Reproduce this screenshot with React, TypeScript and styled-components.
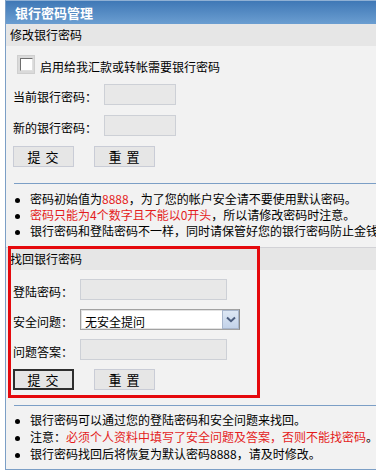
import React from "react";
import styled, { createGlobalStyle } from "styled-components";

const Global = createGlobalStyle`
  html, body { margin: 0; padding: 0; background: #ffffff; overflow: hidden; }
  body { font-family: "Noto Sans CJK SC", "Noto Sans", sans-serif; font-size: 12px; color: #000; }
`;

const Panel = styled.div`
  margin-left: 5px;
  width: 430px;
  background: #f2f2f2;
  border-left: 1px solid #7c9fc6;
  border-bottom: 1px solid #7c9fc6;
  box-sizing: border-box;
`;

const TitleBar = styled.div`
  height: 24px;
  box-sizing: border-box;
  border-top: 1px solid #8fb0d4;
  background: linear-gradient(#3f78b6, #6b9ed1);
  color: #fff;
  font-weight: bold;
  font-size: 13px;
  line-height: 23px;
  padding-left: 9px;
`;

const SectionHeader = styled.div<{ $bordered?: boolean }>`
  height: ${(p) => (p.$bordered ? 23 : 22)}px;
  box-sizing: border-box;
  background: #e6e6e6;
  border-top: ${(p) => (p.$bordered ? "1px solid #d2d2d6" : "none")};
  line-height: 22px;
  padding-left: 4px;
  font-size: 12px;
`;

const Section = styled.div`
  position: relative;
`;

const Body = styled.div`
  padding-left: 7px;
`;

const CheckRow = styled.label`
  display: flex;
  align-items: center;
  height: 20px;
  margin-top: 8px;
  padding-left: 4px;
  gap: 5px;
`;

const CheckBox = styled.span`
  width: 18px;
  height: 19px;
  box-sizing: border-box;
  background: #dadada;
  border: 1px solid #cfcfcf;
  display: flex;
  align-items: center;
  justify-content: center;
  &::after {
    content: "";
    width: 11px;
    height: 11px;
    background: #fff;
    border-top: 1px solid #6e6e6e;
    border-left: 1px solid #6e6e6e;
    border-right: 1px solid #e0e0e0;
    border-bottom: 1px solid #e0e0e0;
  }
`;

const CheckText = styled.span`
  padding-top: 4px;
`;

const FieldRow = styled.div<{ $top: number; $labelW: number }>`
  display: flex;
  align-items: center;
  height: 21px;
  margin-top: ${(p) => p.$top}px;
  & > span:first-child {
    width: ${(p) => p.$labelW}px;
    padding-top: 4px;
  }
`;

const Label = styled.span``;

const TextInput = styled.input<{ $w: number }>`
  width: ${(p) => p.$w}px;
  height: 21px;
  box-sizing: border-box;
  background: #e8e8e8;
  border: 1px solid #cdd0d6;
  margin: 0;
  padding: 0;
  outline: none;
`;

const SelectBox = styled.div`
  width: 160px;
  height: 21px;
  box-sizing: border-box;
  background: #fff;
  border: 1px solid #a2a2a2;
  border-right-color: #8a8a8a;
  display: flex;
  align-items: stretch;
`;

const SelectText = styled.span`
  flex: 1;
  padding-left: 3px;
  line-height: 21px;
  border: 1px solid #e2e2e2;
  border-right: none;
`;

const SelectButton = styled.span`
  width: 17px;
  box-sizing: border-box;
  border: 1px solid #a8b6cc;
  background: linear-gradient(#dde7f4, #c3d3ea);
  display: flex;
  align-items: center;
  justify-content: center;
`;

const ButtonRow = styled.div<{ $top: number }>`
  display: flex;
  gap: 20px;
  margin-top: ${(p) => p.$top}px;
  padding-left: 7px;
`;

const Button = styled.button<{ $focused?: boolean }>`
  width: 61px;
  height: 21px;
  box-sizing: border-box;
  margin: 0;
  padding: 0;
  background: #e6e6e6;
  border: ${(p) => (p.$focused ? "2px solid #2e2e2e" : "1px solid #c9ccd6")};
  font-family: "Noto Sans CJK SC", sans-serif;
  font-size: 13px;
  line-height: 17px;
  color: #000;
  letter-spacing: 1px;
`;

const Divider = styled.div<{ $top: number }>`
  height: 1px;
  background: #7c9fc6;
  margin-left: 8px;
  margin-top: ${(p) => p.$top}px;
`;

const BulletList = styled.ul<{ $top: number; $lh: number; $bottom?: number }>`
  list-style: none;
  margin: ${(p) => p.$top}px 0 ${(p) => p.$bottom ?? 0}px 0;
  padding: 0 0 0 24px;
  & > li {
    position: relative;
    line-height: ${(p) => p.$lh}px;
    height: ${(p) => p.$lh}px;
    white-space: nowrap;
  }
  & > li::before {
    content: "";
    position: absolute;
    left: -15px;
    top: ${(p) => Math.round(p.$lh / 2) - 1}px;
    width: 5px;
    height: 5px;
    border-radius: 50%;
    background: #000;
  }
`;

const Red = styled.span`
  color: #e41c1c;
`;

const Highlight = styled.div`
  position: absolute;
  left: 2px;
  top: -1px;
  width: 252px;
  height: 152px;
  box-sizing: border-box;
  border: 3px solid #e5090d;
  pointer-events: none;
`;

const Chevron = () => (
  <svg width="10" height="7" viewBox="0 0 10 7">
    <path d="M1 1.5 L5 5.2 L9 1.5" fill="none" stroke="#4b5d7e" strokeWidth="2" />
  </svg>
);

export default function App() {
  return (
    <>
      <Global />
      <Panel>
        <TitleBar>银行密码管理</TitleBar>
        <Section>
          <SectionHeader>修改银行密码</SectionHeader>
          <Body>
            <CheckRow>
              <CheckBox />
              <CheckText>启用给我汇款或转帐需要银行密码</CheckText>
            </CheckRow>
            <FieldRow $top={10} $labelW={91}>
              <Label>当前银行密码：</Label>
              <TextInput $w={72} />
            </FieldRow>
            <FieldRow $top={10} $labelW={91}>
              <Label>新的银行密码：</Label>
              <TextInput $w={72} />
            </FieldRow>
          </Body>
          <ButtonRow $top={10}>
            <Button>提 交</Button>
            <Button>重 置</Button>
          </ButtonRow>
          <Divider $top={16} />
          <BulletList $top={7} $lh={16}>
            <li>
              密码初始值为<Red>8888</Red>，为了您的帐户安全请不要使用默认密码。
            </li>
            <li>
              <Red>密码只能为4个数字且不能以0开头</Red>，所以请修改密码时注意。
            </li>
            <li>银行密码和登陆密码不一样，同时请保管好您的银行密码防止金钱被盗。</li>
          </BulletList>
        </Section>
        <Section style={{ marginTop: 8 }}>
          <SectionHeader $bordered>找回银行密码</SectionHeader>
          <Body>
            <FieldRow $top={9} $labelW={67}>
              <Label>登陆密码：</Label>
              <TextInput $w={147} />
            </FieldRow>
            <FieldRow $top={9} $labelW={67}>
              <Label>安全问题：</Label>
              <SelectBox>
                <SelectText>无安全提问</SelectText>
                <SelectButton>
                  <Chevron />
                </SelectButton>
              </SelectBox>
            </FieldRow>
            <FieldRow $top={9} $labelW={67}>
              <Label>问题答案：</Label>
              <TextInput $w={147} />
            </FieldRow>
          </Body>
          <ButtonRow $top={9}>
            <Button $focused>提 交</Button>
            <Button>重 置</Button>
          </ButtonRow>
          <Divider $top={15} />
          <BulletList $top={5} $lh={17} $bottom={7}>
            <li>银行密码可以通过您的登陆密码和安全问题来找回。</li>
            <li>
              注意：<Red>必须个人资料中填写了安全问题及答案，否则不能找密码</Red>。
            </li>
            <li>银行密码找回后将恢复为默认密码8888，请及时修改。</li>
          </BulletList>
          <Highlight />
        </Section>
      </Panel>
    </>
  );
}
